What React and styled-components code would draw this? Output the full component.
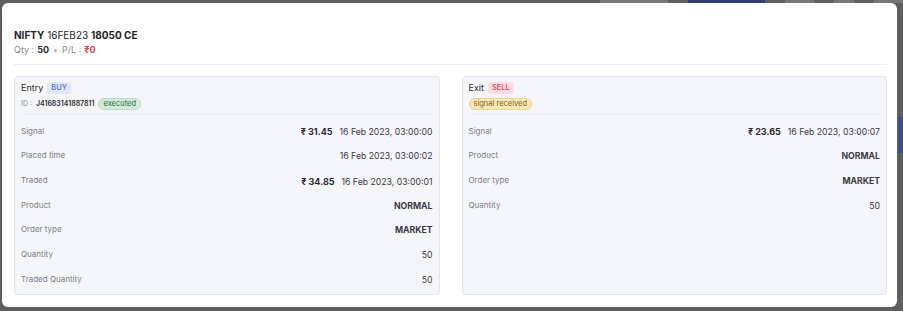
import React from "react";
import styled, { createGlobalStyle } from "styled-components";

const Global = createGlobalStyle`
  html, body { margin: 0; padding: 0; }
  body {
    background: #5f5f5f;
    font-family: Inter, "Noto Sans", sans-serif;
    color: #2b2b33;
    width: 903px;
    height: 311px;
    overflow: hidden;
  }
`;

const Backdrop = styled.div`
  display: flex;
  flex-direction: column;
  height: 311px;
  box-sizing: border-box;
  padding: 3px 6px 4px 2px;
  position: relative;
`;

const BehindBar = styled.div`
  position: absolute;
  top: 0;
  left: 600px;
  right: 0;
  height: 3px;
  display: flex;
  gap: 20px;
  align-items: stretch;
`;

const BehindChip = styled.div`
  width: ${(p) => p.w}px;
  background: ${(p) => p.c};
`;

const SideStrip = styled.div`
  position: absolute;
  top: 117px;
  right: 0;
  width: 5px;
  height: 36px;
  background: #3b4f8c;
`;

const Modal = styled.div`
  position: relative;
  z-index: 1;
  flex: 1;
  min-height: 0;
  background: #ffffff;
  border-radius: 6px;
  padding: 25px 10px 12px 12px;
  display: flex;
  flex-direction: column;
  box-sizing: border-box;
`;

const Title = styled.div`
  font-size: 10px;
  line-height: 14px;
  color: #1f1f26;
  font-weight: 400;
`;

const B = styled.span`
  font-weight: 700;
`;

const SubLine = styled.div`
  font-size: 9px;
  line-height: 14px;
  color: #8a8a94;
  display: flex;
  align-items: center;
  gap: 3px;
  margin-top: 1px;
`;

const Strong = styled.span`
  font-weight: 700;
  color: ${(p) => p.c || "#2b2b33"};
`;

const Dot = styled.span`
  width: 3px;
  height: 3px;
  border-radius: 50%;
  background: #b5b5bd;
  margin: 0 2px;
`;

const Divider = styled.div`
  height: 1px;
  background: #ececf0;
  margin: 7px 0 11px;
`;

const Cards = styled.div`
  flex: 1;
  min-height: 0;
  display: grid;
  grid-template-columns: 1fr 1fr;
  gap: 22px;
`;

const Card = styled.div`
  background: #f5f6fb;
  border: 1px solid #e2e4ee;
  border-radius: 4px;
  padding: 0 6px;
  display: flex;
  flex-direction: column;
  min-height: 0;
`;

const CardHead = styled.div`
  padding: 4px 0 4px;
  border-bottom: 1px solid #eceef5;
  display: flex;
  flex-direction: column;
  gap: 4px;
`;

const HeadLine = styled.div`
  display: flex;
  align-items: center;
  gap: 4px;
  font-size: 9px;
  line-height: 13px;
  color: #2b2b33;
`;

const Tag = styled.span`
  font-size: 7.5px;
  line-height: 12px;
  padding: 0 4px;
  border-radius: 3px;
  font-weight: 500;
  background: ${(p) => (p.kind === "buy" ? "#dfe7f9" : "#fbdde2")};
  color: ${(p) => (p.kind === "buy" ? "#4c79d6" : "#e2445a")};
`;

const IdLine = styled.div`
  display: flex;
  align-items: center;
  gap: 4px;
  font-size: 7px;
  line-height: 12px;
  color: #8a8a94;
`;

const IdVal = styled.span`
  color: #2b2b33;
  font-weight: 600;
`;

const Pill = styled.span`
  font-size: 7.5px;
  line-height: 10px;
  padding: 0 4px;
  border-radius: 7px;
  border: 1px solid ${(p) => (p.kind === "ok" ? "#b9dcc2" : "#ecd58c")};
  background: ${(p) => (p.kind === "ok" ? "#d3ecd9" : "#f8e9b6")};
  color: ${(p) => (p.kind === "ok" ? "#2e6c40" : "#7a621c")};
`;

const Rows = styled.div`
  display: flex;
  flex-direction: column;
  padding-top: 4px;
`;

const Row = styled.div`
  height: 24.67px;
  display: flex;
  align-items: center;
  justify-content: space-between;
`;

const Label = styled.span`
  font-size: 8px;
  color: #7d7d87;
  margin-top: -1px;
`;

const Value = styled.span`
  font-size: 8.7px;
  color: #3a3a44;
  display: flex;
  align-items: baseline;
  gap: 7px;
  margin-top: 1px;
  font-weight: ${(p) => (p.bold ? 700 : 400)};
`;

const Amount = styled.span`
  font-weight: 700;
  font-size: 9px;
  color: #2b2b33;
`;

const entryRows = [
  { label: "Signal", amount: "₹ 31.45", time: "16 Feb 2023, 03:00:00" },
  { label: "Placed time", time: "16 Feb 2023, 03:00:02" },
  { label: "Traded", amount: "₹ 34.85", time: "16 Feb 2023, 03:00:01" },
  { label: "Product", text: "NORMAL", bold: true },
  { label: "Order type", text: "MARKET", bold: true },
  { label: "Quantity", text: "50" },
  { label: "Traded Quantity", text: "50" },
];

const exitRows = [
  { label: "Signal", amount: "₹ 23.65", time: "16 Feb 2023, 03:00:07" },
  { label: "Product", text: "NORMAL", bold: true },
  { label: "Order type", text: "MARKET", bold: true },
  { label: "Quantity", text: "50" },
];

function DetailRows({ rows }) {
  return (
    <Rows>
      {rows.map((r) => (
        <Row key={r.label}>
          <Label>{r.label}</Label>
          <Value bold={r.bold}>
            {r.amount && <Amount>{r.amount}</Amount>}
            {r.time || r.text}
          </Value>
        </Row>
      ))}
    </Rows>
  );
}

export default function App() {
  return (
    <>
      <Global />
      <Backdrop>
        <BehindBar>
          <BehindChip w={70} c="#777" />
          <BehindChip w={78} c="#2f3f78" />
          <BehindChip w={30} c="#777" />
          <BehindChip w={20} c="#777" />
          <BehindChip w={30} c="#777" />
        </BehindBar>
        <SideStrip />
        <Modal>
          <Title>
            <B>NIFTY</B> 16FEB23 <B>18050 CE</B>
          </Title>
          <SubLine>
            Qty : <Strong>50</Strong>
            <Dot />
            P/L : <Strong c="#e0394b">₹0</Strong>
          </SubLine>
          <Divider />
          <Cards>
            <Card>
              <CardHead>
                <HeadLine>
                  Entry <Tag kind="buy">BUY</Tag>
                </HeadLine>
                <IdLine>
                  ID : <IdVal>J41683141887811</IdVal>
                  <Pill kind="ok">executed</Pill>
                </IdLine>
              </CardHead>
              <DetailRows rows={entryRows} />
            </Card>
            <Card>
              <CardHead>
                <HeadLine>
                  Exit <Tag kind="sell">SELL</Tag>
                </HeadLine>
                <IdLine>
                  <Pill kind="warn">signal received</Pill>
                </IdLine>
              </CardHead>
              <DetailRows rows={exitRows} />
            </Card>
          </Cards>
        </Modal>
      </Backdrop>
    </>
  );
}
